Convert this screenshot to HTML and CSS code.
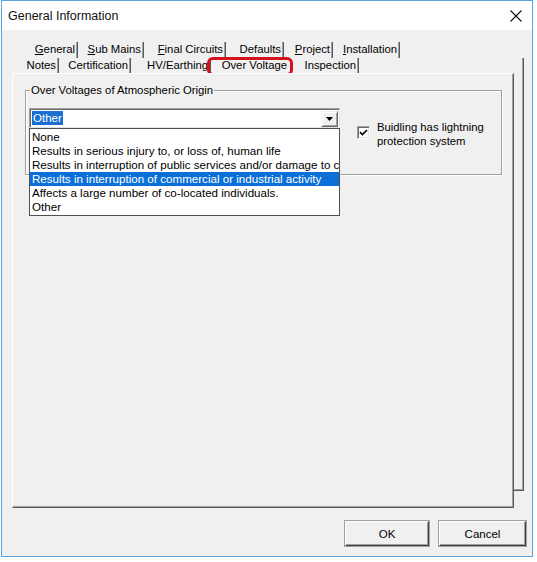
FILE: index.html
```html
<!DOCTYPE html>
<html lang="en">
<head>
<meta charset="UTF-8">
<meta name="viewport" content="width=device-width, initial-scale=1.0">
<title>General Information</title>
<link rel="stylesheet" href="styles.css">
</head>
<body>

<div class="window">
    <div class="titlebar">
        <span class="title">General Information</span>
        <svg class="close" width="12" height="12" viewBox="0 0 12 12">
            <path d="M0.5 0.5 L11.5 11.5 M11.5 0.5 L0.5 11.5" stroke="#111" stroke-width="1.1" fill="none"/>
        </svg>
    </div>

    <div class="client">
        <div class="tabrow row1">
            <span class="tab t-general"><u>G</u>eneral</span>
            <span class="tab t-submains"><u>S</u>ub Mains</span>
            <span class="tab t-final"><u>F</u>inal Circuits</span>
            <span class="tab t-defaults">Defaults</span>
            <span class="tab t-project"><u>P</u>roject</span>
            <span class="tab t-install"><u>I</u>nstallation</span>
        </div>
        <div class="tabrow row2">
            <span class="tab t-notes">Notes</span>
            <span class="tab t-cert">Certification</span>
            <span class="tab t-hv">HV/Earthing</span>
            <span class="tab t-over active">Over Voltage</span>
            <span class="tab t-insp">Inspection</span>
        </div>

        <div class="panel">
            <div class="group">
                <span class="group-label">Over Voltages of Atmospheric Origin</span>
                <div class="group-body">
                    <div class="combo">
                        <span class="combo-value">Other</span>
                        <span class="combo-button">
                            <svg width="7" height="4" viewBox="0 0 7 4"><polygon points="0,0 7,0 3.5,4" fill="#000"/></svg>
                        </span>
                        <div class="list">
                            <div class="item">None</div>
                            <div class="item">Results in serious injury to, or loss of, human life</div>
                            <div class="item">Results in interruption of public services and/or damage to cultural heritage</div>
                            <div class="item selected">Results in interruption of commercial or industrial activity</div>
                            <div class="item">Affects a large number of co-located individuals.</div>
                            <div class="item">Other</div>
                        </div>
                    </div>
                    <div class="check">
                        <span class="box">
                            <svg width="9" height="9" viewBox="0 0 9 9"><path d="M1 4.2 L3.4 6.6 L8 2" stroke="#000" stroke-width="1.7" fill="none"/></svg>
                        </span>
                        <span class="check-label">Buidling has lightning<br>protection system</span>
                    </div>
                </div>
            </div>
        </div>

        <div class="buttons">
            <button class="btn btn-ok">OK</button>
            <button class="btn btn-cancel">Cancel</button>
        </div>
    </div>
</div>

</body>
</html>
```

FILE: styles.css
```css
body {
    margin: 0;
    background: #fff;
    font-family: "Liberation Sans", Arial, sans-serif;
    font-size: 11.3px;
    color: #000;
}
.window {
    position: relative;
    z-index: 0;
    box-sizing: border-box;
    width: 532px;
    height: 557px;
    margin-left: 1px;
    border: 1px solid #5aa2dd;
    background: #f0f0f0;
    display: flex;
    flex-direction: column;
}
.titlebar {
    height: 29px;
    background: #fff;
    display: flex;
    align-items: center;
    justify-content: space-between;
    padding: 0 10px 0 6px;
}
.title {
    font-size: 12.5px;
    color: #111;
}
.client {
    flex: 1;
    display: flex;
    flex-direction: column;
    padding: 12px 0 0 10px;
}

/* tabs */
.tabrow {
    display: flex;
}
.row1 {
    height: 16px;
    margin-left: 18px;
}
.row2 {
    height: 15px;
    margin-left: 4px;
}
.tab {
    box-sizing: border-box;
    height: 100%;
    line-height: 15px;
    text-align: right;
    padding-right: 2px;
    white-space: nowrap;
    border-right: 1px solid #5a5a5a;
    box-shadow: inset -1px 0 0 #a0a0a0;
}
.t-general { width: 48px; }
.t-submains { width: 66px; }
.t-final { width: 82px; }
.t-defaults { width: 58px; }
.t-project { width: 49px; }
.t-install { width: 67px; }
.t-notes { width: 43px; }
.t-cert { width: 72px; }
.t-hv { width: 80px; }
.t-over { width: 80px; }
.t-insp { width: 68px; }
.tab.active {
    position: relative;
    border-right: none;
    box-shadow: none;
    padding-right: 4px;
}
.tab.active::after {
    content: '';
    position: absolute;
    left: -4px;
    right: -2px;
    top: -1px;
    bottom: -3px;
    border: 3px solid #d3121c;
    border-radius: 6px;
}

/* page */
.panel {
    position: relative;
    box-sizing: border-box;
    width: 502px;
    height: 435px;
    background: #f0f0f0;
    border-top: 1px solid #fff;
    border-left: 1px solid #fff;
    border-right: 1px solid #5a5a5a;
    border-bottom: 1px solid #5a5a5a;
    box-shadow: inset -1px -1px 0 #a0a0a0;
}
.panel::before {
    content: '';
    position: absolute;
    z-index: -1;
    top: -16px;
    right: -11px;
    bottom: 16px;
    left: 16px;
    border-right: 1px solid #5a5a5a;
    border-bottom: 1px solid #5a5a5a;
    box-shadow: inset -1px -1px 0 #a0a0a0;
}
.group {
    position: relative;
    box-sizing: border-box;
    width: 477px;
    height: 85px;
    margin: 16px 0 0 12px;
    border: 1px solid #a0a0a0;
    box-shadow: 1px 1px 0 #fff, inset 1px 1px 0 #fff;
}
.group-label {
    position: absolute;
    top: -7px;
    left: 4px;
    padding: 0 1px;
    line-height: 13px;
    background: #f0f0f0;
}
.group-body {
    display: flex;
    align-items: flex-start;
    padding: 17px 0 0 3px;
}

/* combo box */
.combo {
    position: relative;
    box-sizing: border-box;
    width: 311px;
    height: 20px;
    display: flex;
    align-items: center;
    background: #fff;
    border-top: 1px solid #a0a0a0;
    border-left: 1px solid #a0a0a0;
    border-right: 1px solid #e3e3e3;
    border-bottom: 1px solid #e3e3e3;
    box-shadow: inset 1px 1px 0 #696969;
}
.combo-value {
    margin-left: 2px;
    padding: 0 1px;
    line-height: 14px;
    font-size: 11.5px;
    background: #1a6fd0;
    color: #fff;
}
.combo-button {
    box-sizing: border-box;
    width: 17px;
    height: 16px;
    margin: 1px 1px 0 auto;
    display: flex;
    align-items: center;
    justify-content: center;
    background: #f0f0f0;
    border-top: 1px solid #f0f0f0;
    border-left: 1px solid #f0f0f0;
    border-right: 1px solid #696969;
    border-bottom: 1px solid #696969;
    box-shadow: inset 1px 1px 0 #fff, inset -1px -1px 0 #a0a0a0;
}
.list {
    position: absolute;
    z-index: 1;
    top: 19px;
    left: -1px;
    box-sizing: border-box;
    width: 311px;
    padding: 1px 0;
    background: #fff;
    border: 1px solid #505050;
}
.item {
    height: 14px;
    line-height: 14px;
    padding-left: 2px;
    font-size: 11.6px;
    white-space: nowrap;
    overflow: hidden;
}
.item.selected {
    background: #0a6fd6;
    color: #fff;
}

/* checkbox */
.check {
    display: flex;
    gap: 7px;
    margin: 12px 0 0 17px;
}
.box {
    box-sizing: border-box;
    width: 13px;
    height: 13px;
    margin-top: 6px;
    display: flex;
    align-items: center;
    justify-content: center;
    background: #fff;
    border-top: 1px solid #a0a0a0;
    border-left: 1px solid #a0a0a0;
    border-right: 1px solid #fff;
    border-bottom: 1px solid #fff;
    box-shadow: inset 1px 1px 0 #696969, inset -1px -1px 0 #e3e3e3;
}
.check-label {
    line-height: 14px;
}

/* buttons */
.buttons {
    display: flex;
    justify-content: flex-end;
    gap: 10px;
    margin-top: 13px;
    padding-right: 6px;
}
.btn {
    box-sizing: border-box;
    height: 25px;
    padding: 0;
    font-family: "Liberation Sans", Arial, sans-serif;
    font-size: 11.5px;
    color: #000;
    background: #f0f0f0;
    border-top: 1px solid #fff;
    border-left: 1px solid #fff;
    border-right: 1px solid #404040;
    border-bottom: 1px solid #404040;
    box-shadow: inset -1px -1px 0 #a0a0a0;
    outline: 1px solid #a0a0a0;
}
.btn-ok { width: 84px; }
.btn-cancel { width: 87px; }
```
